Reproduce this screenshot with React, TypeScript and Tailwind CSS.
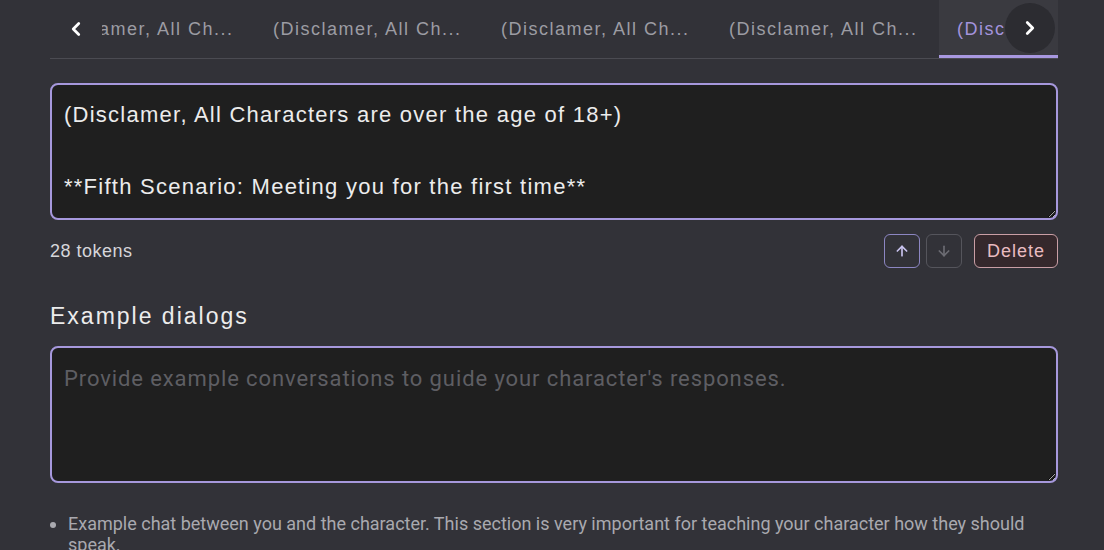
import { ChevronLeft, ChevronRight, ArrowUp, ArrowDown } from "lucide-react";

const TAB_LABEL = "(Disclamer, All Ch...";

export default function App() {
  const tabs = [0, 1, 2, 3, 4];
  const active = 4;

  return (
    <div className="min-h-screen bg-[#323238] pl-[50px] pr-[46px] font-['Liberation_Sans',sans-serif]">
      {/* Scenario tabs */}
      <div className="relative h-[59px] border-b border-[#4b4b52]">
        <div className="h-full overflow-hidden">
          <div className="-ml-[23px] flex h-full">
            {tabs.map((i) => (
              <div
                key={i}
                className={`flex h-full w-[228px] shrink-0 items-center overflow-hidden whitespace-nowrap pl-[18px] text-[18px] tracking-[1.5px] ${
                  i === active
                    ? "border-b-[3px] border-[#a898e0] bg-[#3a3a40] pt-[3px] text-[#a393dc]"
                    : "text-[#9c9ca3]"
                }`}
              >
                {i === active ? "(Disc" : TAB_LABEL}
              </div>
            ))}
          </div>
        </div>
        <button className="absolute left-0 top-0 flex h-full w-[52px] items-center justify-center bg-[#323238] text-white">
          <ChevronLeft size={22} strokeWidth={3} />
        </button>
        <button className="absolute right-[3px] top-[3px] flex h-[50px] w-[50px] items-center justify-center rounded-full bg-[#2c2c31] text-white">
          <ChevronRight size={22} strokeWidth={3} />
        </button>
      </div>

      {/* Scenario text */}
      <textarea
        readOnly
        defaultValue={
          "(Disclamer, All Characters are over the age of 18+)\n\n**Fifth Scenario: Meeting you for the first time**"
        }
        className="mt-[24px] block h-[137px] w-full overflow-hidden rounded-[8px] border-2 border-[#a698dc] bg-[#1f1f1f] px-[12px] pt-[12px] text-[22px] leading-[36px] tracking-[1.25px] text-[#ececec] outline-none"
      />

      <div className="mt-[14px] flex h-[34px] items-center">
        <span className="text-[18px] tracking-[0.5px] text-[#d6d6da]">28 tokens</span>
        <div className="ml-auto flex items-center">
          <button className="flex h-[34px] w-[36px] items-center justify-center rounded-[6px] border border-[#8c86c2] text-[#c9c3ef]">
            <ArrowUp size={16} strokeWidth={2.5} />
          </button>
          <button className="ml-[6px] flex h-[34px] w-[36px] items-center justify-center rounded-[6px] border border-[#55555c] text-[#6c6c73]">
            <ArrowDown size={16} strokeWidth={2.5} />
          </button>
          <button className="ml-[12px] flex h-[34px] w-[84px] items-center justify-center rounded-[6px] border border-[#c99ea5] bg-[#35282c] text-[18px] tracking-[1px] text-[#e9bcc1]">
            Delete
          </button>
        </div>
      </div>

      <h2 className="mt-[32px] text-[23px] leading-[32px] tracking-[2px] text-[#ececec]">Example dialogs</h2>

      <textarea
        readOnly
        placeholder="Provide example conversations to guide your character's responses."
        className="mt-[14px] block h-[137px] w-full overflow-hidden rounded-[8px] border-2 border-[#a698dc] bg-[#1f1f1f] px-[12px] pt-[16px] font-['Roboto',sans-serif] text-[22px] leading-[30px] tracking-[0.9px] text-[#ececec] outline-none placeholder:text-[#5e5e63]"
      />

      <ul className="mt-[30px] list-disc pl-[18px] font-['Roboto',sans-serif] text-[18px] leading-[21px] text-[#a9a9af] marker:text-[#a9a9af]">
        <li>
          Example chat between you and the character. This section is very important for teaching your character how
          they should speak.
        </li>
      </ul>
    </div>
  );
}
